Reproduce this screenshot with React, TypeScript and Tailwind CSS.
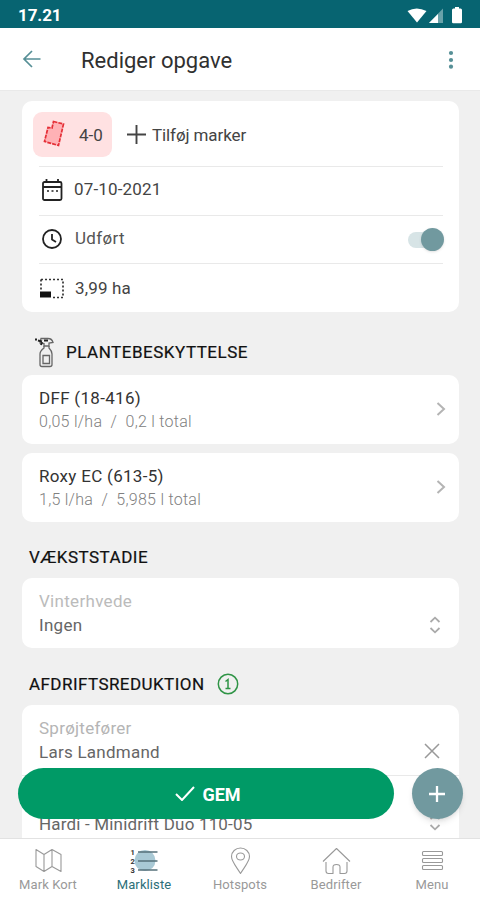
import type { ReactNode } from "react";

function Section({ children, className = "" }: { children: ReactNode; className?: string }) {
  return <section className={`rounded-[10px] bg-white ${className}`}>{children}</section>;
}

function UpDown() {
  return (
    <svg width="12" height="18" viewBox="0 0 12 18" fill="none" stroke="#aaaaaa" strokeWidth="1.8">
      <path d="M1.5 6 6 1.7 10.5 6M1.5 12 6 16.3 10.5 12" />
    </svg>
  );
}

function Product({ name, amount }: { name: string; amount: string }) {
  return (
    <Section className="flex h-[69px] items-center justify-between pr-[13px] pl-[17px]">
      <div>
        <div className="text-[17px] leading-[23px] tracking-[0.3px] text-[#333]">{name}</div>
        <div className="text-[16px] leading-[23px] font-light tracking-[0.26px] whitespace-pre text-[#808080]">{amount}</div>
      </div>
      <svg className="-mt-[2px]" width="10" height="14" viewBox="0 0 10 14" fill="none" stroke="#b4b4b4" strokeWidth="2">
        <path d="m1.5 1 6.5 6-6.5 6" />
      </svg>
    </Section>
  );
}

function Tab({ label, active = false, children }: { label: string; active?: boolean; children: ReactNode }) {
  return (
    <div className={`flex w-24 flex-col items-center ${active ? "text-[#2c6f79]" : "text-[#999]"}`}>
      <svg width="32" height="28" viewBox="0 0 32 28" fill="none" stroke="currentColor" strokeWidth="1.1" strokeLinejoin="round">
        {children}
      </svg>
      <span className="mt-[1px] text-[13px] leading-[17px] tracking-[0.1px]">{label}</span>
    </div>
  );
}

export default function App() {
  return (
    <div className="relative flex h-[900px] w-[480px] flex-col overflow-hidden bg-[#f0f0f0] font-['Roboto',sans-serif]">
      <div className="flex h-[28px] shrink-0 items-center justify-between bg-[#076471] pt-[3px] pr-[16px] pl-[18px] text-white">
        <span className="text-[17px] font-bold tracking-[-0.1px]">17.21</span>
        <svg width="58" height="18" viewBox="0 0 58 18" fill="white">
          <path d="M1.5 4Q10.5-1 20.5 4L11 15.5Z" />
          <path d="M23 16 37 1.5V16Z" opacity=".4" />
          <path d="M23 16 32 7V16Z" />
          <path d="M49 0h4v1.5h1.5q1.500 0 1.500 1.500v12q0 1.200-1.200 1.200h-7.600Q46 16.200 46 15V3q0-1.500 1.500-1.500H49Z" />
        </svg>
      </div>
      <header className="flex h-[63px] shrink-0 items-center border-b border-[#e9e9e9] bg-white pr-[24px] pl-[22px]">
        <svg width="20" height="18" viewBox="0 0 20 18" fill="none" stroke="#568f96" strokeWidth="1.7">
          <path d="M18.500 9H2M10 1 2 9l8 8" />
        </svg>
        <h1 className="ml-[39px] flex-1 pt-[2px] text-[22px] text-[#303030]">Rediger opgave</h1>
        <svg className="mt-[1px]" width="10" height="20" viewBox="0 0 10 20" fill="#568f96">
          <circle cx="5" cy="3" r="2.1" /><circle cx="5" cy="10" r="2.1" /><circle cx="5" cy="16.700" r="2.1" />
        </svg>
      </header>

      <main className="flex min-h-0 flex-1 flex-col overflow-hidden pt-[10px] pr-[21px] pl-[22px] [&>*]:shrink-0">
        <Section className="h-[211px] pr-[16px] pl-[17px] text-[17px] text-[#444]">
          <div className="-ml-[6px] flex h-[65px] items-center pt-[1px]">
            <div className="flex h-[45px] w-[79px] items-center rounded-[9px] bg-[#ffe1e2] pl-[10px]">
              <svg width="24" height="28" viewBox="0 0 24 28" fill="#ffb1b5" stroke="#e52e36" strokeWidth="1.7" strokeDasharray="4 1">
                <path d="M10.500 1.500 20.500 4 15.500 25.500 1.500 21.500 5 7.500 9 8Z" />
              </svg>
              <span className="mt-[3px] ml-[12px]">4-0</span>
            </div>
            <svg className="ml-[15px]" width="19" height="19" viewBox="0 0 19 19" stroke="#444" strokeWidth="1.9">
              <path d="M9.500 0v19M0 9.500h19" />
            </svg>
            <span className="mt-[3px] ml-[6px] tracking-[-0.1px]">Tilføj marker</span>
          </div>
          <div className="flex h-[49px] items-center border-t border-[#e9e9e9] pb-[2px]">
            <svg className="ml-[3px]" width="21" height="23" viewBox="0 0 21 23" fill="none" stroke="#222" strokeWidth="1.8">
              <rect x="1" y="3" width="18.500" height="18" rx="1.500" />
              <path d="M1 8h18.500M4.500 0v3M16 0v3" />
              <path d="M5 12h12" strokeDasharray="2 2.500" strokeWidth="1.300" />
            </svg>
            <span className="ml-[11px] tracking-[0.150px]">07-10-2021</span>
          </div>
          <div className="flex h-[48px] items-center border-t border-[#e9e9e9]">
            <svg className="-mt-[2px] ml-[2px]" width="22" height="22" viewBox="0 0 22 22" fill="none" stroke="#222" strokeWidth="1.8">
              <circle cx="11" cy="11" r="9" /><path d="M11 6v5.500l4 2.500" />
            </svg>
            <span className="-mt-[2px] ml-[12px] flex-1 tracking-[0.350px] text-[#555]">Udført</span>
            <div className="flex h-[16px] w-[35px] items-center justify-end rounded-full bg-[#d7e4e6]">
              <div className="-mr-[1px] h-[23px] w-[23px] shrink-0 rounded-full bg-[#71999f] shadow-sm" />
            </div>
          </div>
          <div className="flex h-[49px] items-center border-t border-[#e9e9e9]">
            <svg className="ml-[1px]" width="25" height="21" viewBox="0 0 25 21" fill="none" stroke="#333" strokeWidth="1.700">
              <path d="M1 1.500h22v18H12" strokeDasharray="2 2" /><path d="M1 1.500v12" strokeDasharray="2 2" />
              <path d="M0 13.500h11v6H0Z" fill="#111" stroke="none" />
            </svg>
            <span className="mt-[2px] ml-[10px] tracking-[0.150px]">3,99 ha</span>
          </div>
        </Section>
        <div className="flex h-[63px] items-center pt-[18px] pl-[12px]">
          <svg width="22" height="31" viewBox="0 0 22 31" fill="none" stroke="#666" strokeWidth="1.300">
            <path d="M7 1.500h7q4 0 5 4l-4 .5V9h-5V6.500L6 6Z" />
            <path d="M10 9v2q-4 3-4 6v10.500q0 2 2 2h8q2 0 2-2V17q0-3-3-6V9M9 18.500h6.500v8H9Z" />
            <path d="M1 2.500h2M4 3.500l4 1M8 5l-1 3M10 3.500h4" stroke="#222" strokeWidth="2" />
          </svg>
          <h2 className="ml-[10px] pt-[1px] text-[17px] tracking-[0.520px] text-[#111] [-webkit-text-stroke:0.2px_#111]">PLANTEBESKYTTELSE</h2>
        </div>
        <Product name="DFF (18-416)" amount="0,05 l/ha  /  0,2 l total" />
        <div className="h-[9px]" />
        <Product name="Roxy EC (613-5)" amount="1,5 l/ha  /  5,985 l total" />
        <h2 className="flex h-[56px] items-center pt-[15px] pl-[7px] text-[17px] tracking-[0.500px] text-[#111] [-webkit-text-stroke:0.2px_#111]">VÆKSTSTADIE</h2>
        <Section className="flex h-[70px] items-center justify-between pr-[18px] pl-[17px]">
          <div className="text-[17px] leading-[24px] tracking-[0.300px]">
            <div className="text-[#bbb]">Vinterhvede</div>
            <div className="text-[#666]">Ingen</div>
          </div>
          <div className="pt-[24px]"><UpDown /></div>
        </Section>
        <div className="flex h-[57px] items-center pt-[16px] pl-[7px]">
          <h2 className="w-[175px] text-[17px] tracking-[0.440px] whitespace-nowrap text-[#111] [-webkit-text-stroke:0.2px_#111]">AFDRIFTSREDUKTION</h2>
          <svg className="-mt-[1px] ml-[13px]" width="22" height="22" viewBox="0 0 22 22" fill="none" stroke="#2f9446" strokeWidth="1.500">
            <circle cx="11" cy="11" r="9.700" /><path d="M8.500 8.500 11 6.500V15M8.500 15.500h5" />
          </svg>
        </div>
        <Section className="h-[180px] text-[17px] leading-[24px]">
          <div className="flex h-[70px] items-center justify-between pr-[19px] pl-[17px]">
            <div className="tracking-[0.250px]"><div className="text-[#b5b5b5]">Sprøjtefører</div><div className="text-[#666]">Lars Landmand</div></div>
            <svg className="mt-[22px]" width="16" height="16" viewBox="0 0 16 16" stroke="#999" strokeWidth="1.500"><path d="m1 1 14 14M15 1 1 15" /></svg>
          </div>
          <div className="flex h-[73px] items-center justify-between border-t border-[#e9e9e9] pr-[18px] pl-[17px]">
            <div className="tracking-[0.180px]"><div className="text-[#bbb]">Dyse</div><div className="text-[#666]">Hardi - Minidrift Duo 110-05</div></div>
            <div className="pt-[20px]"><UpDown /></div>
          </div>
        </Section>
      </main>

      <div className="absolute top-[768px] left-[18px] flex w-[445px] justify-between">
        <button className="flex h-[51px] w-[376px] items-center justify-center gap-[7px] rounded-full bg-[#009a66] pl-[4px] text-[18px] font-bold text-white">
          <svg width="20" height="15" viewBox="0 0 20 15" fill="none" stroke="white" strokeWidth="2"><path d="m1 8 6 6L19 1" /></svg>
          <span className="pt-[1px]">GEM</span>
        </button>
        <button className="flex h-[51px] w-[51px] items-center justify-center rounded-full bg-[#71999f] pr-[2px] shadow-md">
          <svg width="16" height="16" viewBox="0 0 16 16" stroke="white" strokeWidth="2.300"><path d="M8 0v16M0 8h16" /></svg>
        </button>
      </div>
      <nav className="flex h-[62px] shrink-0 border-t border-[#e2e2e2] bg-white pt-[8px]">
        <Tab label="Mark Kort"><path d="m4 2.500 8 5 8-5 9 5v17l-9-5-8 5-8-5ZM12 7.500v17M20 2.500v17" /></Tab>
        <Tab label="Markliste" active>
          <circle cx="17" cy="13.500" r="10.500" fill="#a9c9d5" stroke="none" />
          <path d="M10 5h19.500M10 14h19.500M10 23h19.500" stroke="#55707a" strokeWidth="1.500" />
          <g fill="#333" stroke="none" fontSize="7.500" fontWeight="bold"><text x="2.500" y="8">1</text><text x="2.500" y="16.500">2</text><text x="2.500" y="25.500">3</text></g>
        </Tab>
        <Tab label="Hotspots"><path d="M16.500 26.500C11 18 7.500 14 7.500 9.500a9 8.500 0 0 1 18 0c0 4.500-3.500 8.500-9 17Z" /><ellipse cx="16.500" cy="9.500" rx="4" ry="3.500" /></Tab>
        <Tab label="Bedrifter"><path d="M3 14.500 16.500 1.500 30 14.500M6 15v9q0 2.500 2.500 2.500H13V20q0-2.500 3.500-2.500T20 20v6.500h4.500q2.500 0 2.500-2.500v-9" /></Tab>
        <Tab label="Menu"><rect x="6.500" y="4.500" width="20" height="4" rx="1" /><rect x="6.500" y="11.500" width="20" height="4" rx="1" /><rect x="6.500" y="18.500" width="20" height="4" rx="1" /></Tab>
      </nav>
    </div>
  );
}
